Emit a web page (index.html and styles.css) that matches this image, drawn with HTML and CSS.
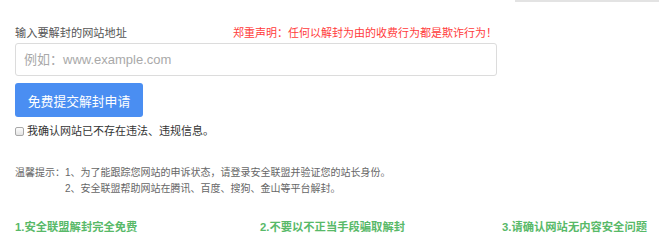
FILE: index.html
```html
<!DOCTYPE html>
<html lang="zh-CN">
<head>
<meta charset="utf-8">
<title>网站解封申请</title>
<link rel="stylesheet" href="styles.css">
</head>
<body>
<div class="topbar"><div class="topbar-line"></div></div>
<main class="page">
  <div class="head-row">
    <label class="field-label" for="site">输入要解封的网站地址</label>
    <span class="warning">郑重声明：任何以解封为由的收费行为都是欺诈行为！</span>
  </div>
  <input class="site-input" id="site" type="text" placeholder="例如：www.example.com">
  <button class="submit-btn" type="button">免费提交解封申请</button>
  <label class="confirm">
    <input class="confirm-box" type="checkbox">
    <span>我确认网站已不存在违法、违规信息。</span>
  </label>
  <div class="tips">
    <span class="tips-title">温馨提示：</span>
    <div class="tips-list">
      <div>1、为了能跟踪您网站的申诉状态，请登录安全联盟并验证您的站长身份。</div>
      <div>2、安全联盟帮助网站在腾讯、百度、搜狗、金山等平台解封。</div>
    </div>
  </div>
  <div class="notes">
    <span>1.安全联盟解封完全免费</span>
    <span>2.不要以不正当手段骗取解封</span>
    <span>3.请确认网站无内容安全问题</span>
  </div>
</main>
</body>
</html>
```
FILE: styles.css
```css
* { box-sizing: border-box; }
html, body {
  margin: 0;
  padding: 0;
  background: #fff;
  font-family: "Liberation Sans", "Noto Sans CJK SC", sans-serif;
  overflow: hidden;
}
.topbar {
  display: flex;
  justify-content: flex-end;
}
.topbar-line {
  width: 144px;
  height: 2px;
  background: #e3e3e3;
}
.page {
  padding-left: 15px;
}
.head-row {
  width: 482px;
  margin-top: 23px;
  display: flex;
  justify-content: space-between;
  align-items: center;
  line-height: 16px;
}
.field-label {
  font-size: 11.2px;
  color: #555;
}
.warning {
  font-size: 11px;
  color: #ff3b3b;
}
.site-input {
  display: block;
  width: 482px;
  height: 33px;
  margin: 2px 0 0;
  padding: 0 8px;
  border: 1px solid #dcdcdc;
  border-radius: 3px;
  font-family: "Liberation Sans", "Noto Sans CJK SC", sans-serif;
  font-size: 13px;
  color: #333;
  outline: none;
}
.site-input::placeholder {
  color: #a9a9a9;
}
.submit-btn {
  display: block;
  width: 128px;
  height: 34px;
  margin-top: 7px;
  padding: 0;
  border: none;
  border-radius: 3px;
  background: #4a8ef2;
  color: #fff;
  font-family: "Liberation Sans", "Noto Sans CJK SC", sans-serif;
  font-size: 12.8px;
}
.confirm {
  display: flex;
  align-items: center;
  margin-top: 6px;
  line-height: 16px;
  font-size: 11px;
  color: #333;
}
.confirm-box {
  appearance: none;
  -webkit-appearance: none;
  width: 9px;
  height: 9px;
  margin: 0 3px 0 0;
  border: 1px solid #a8a8a8;
  border-radius: 2px;
  background: linear-gradient(#fdfdfd, #e4e4e4);
}
.tips {
  display: flex;
  margin-top: 26px;
  font-size: 10px;
  line-height: 16px;
  color: #666;
}
.notes {
  display: grid;
  grid-template-columns: 245px 242px auto;
  margin-top: 22px;
  line-height: 16px;
  font-size: 11.3px;
  font-weight: bold;
  color: #58b968;
  white-space: nowrap;
}
```
